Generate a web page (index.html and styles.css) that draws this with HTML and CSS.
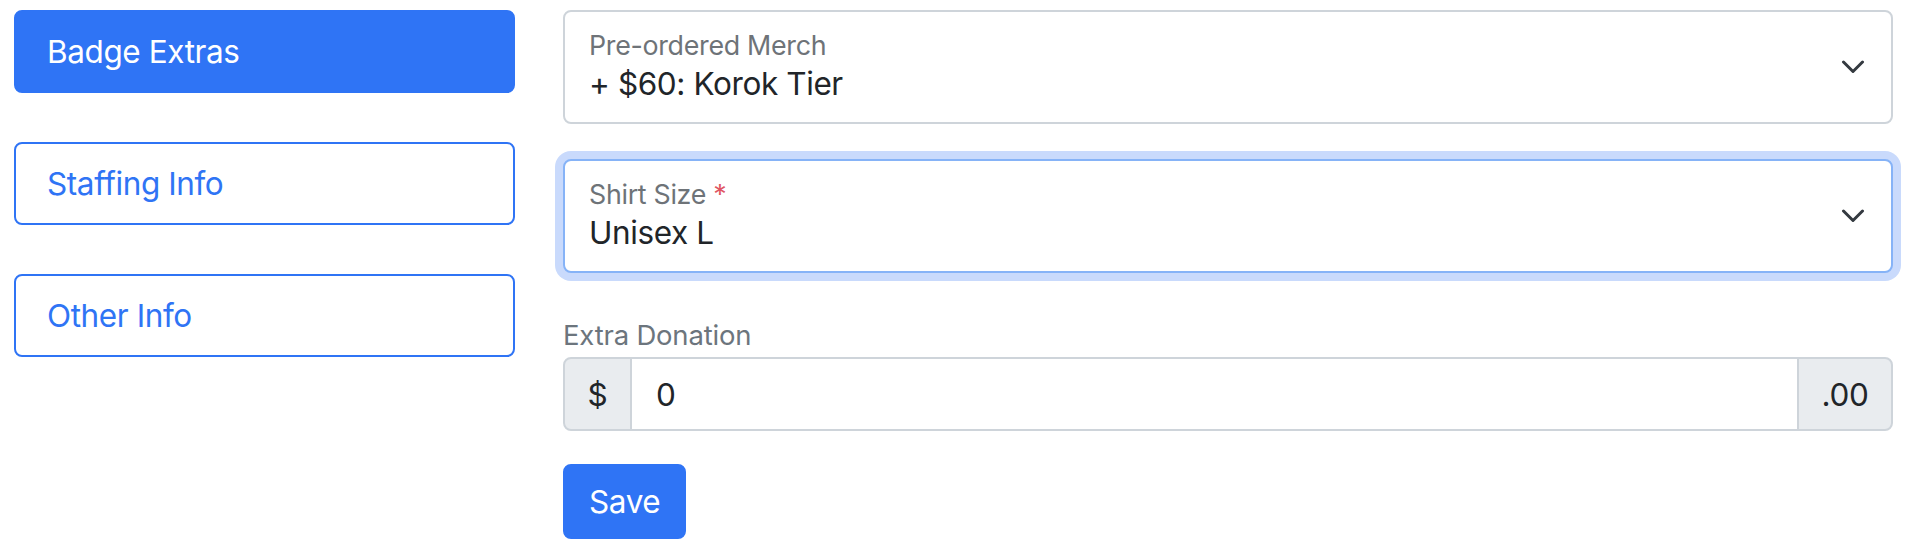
FILE: index.html
```html
<!DOCTYPE html>
<html lang="en">
<head>
<meta charset="utf-8">
<title>Badge Extras</title>
<link rel="stylesheet" href="styles.css">
</head>
<body>
<div class="page">
  <nav class="side-nav">
    <a class="nav-item active" href="#">Badge Extras</a>
    <a class="nav-item" href="#">Staffing Info</a>
    <a class="nav-item" href="#">Other Info</a>
  </nav>
  <form class="form">
    <div class="select-box">
      <div class="select-text">
        <span class="float-label">Pre-ordered Merch</span>
        <span class="select-value">+ $60: Korok Tier</span>
      </div>
      <svg class="chevron" width="24" height="14" viewBox="0 0 24 14"><polyline points="2.5,2 12,11.5 21.5,2" fill="none" stroke="#343a40" stroke-width="3" stroke-linecap="round" stroke-linejoin="round"/></svg>
    </div>
    <div class="select-box focused">
      <div class="select-text">
        <span class="float-label">Shirt Size <span class="req">*</span></span>
        <span class="select-value">Unisex L</span>
      </div>
      <svg class="chevron" width="24" height="14" viewBox="0 0 24 14"><polyline points="2.5,2 12,11.5 21.5,2" fill="none" stroke="#343a40" stroke-width="3" stroke-linecap="round" stroke-linejoin="round"/></svg>
    </div>
    <label class="field-label">Extra Donation</label>
    <div class="input-group">
      <span class="addon addon-left">$</span>
      <span class="input">0</span>
      <span class="addon addon-right">.00</span>
    </div>
    <div class="actions">
      <button type="button" class="btn-save">Save</button>
    </div>
  </form>
</div>
</body>
</html>
```
FILE: styles.css
```css
* { box-sizing: border-box; }
html, body { margin: 0; padding: 0; background: #fff; }
body {
  font-family: Inter, "Noto Sans", "Liberation Sans", sans-serif;
  color: #212529;
}
.page {
  display: grid;
  grid-template-columns: 501px 1fr;
  column-gap: 48px;
  padding: 10px 17px 0 14px;
}
.side-nav {
  display: flex;
  flex-direction: column;
  gap: 49px;
}
.nav-item {
  display: block;
  height: 83px;
  padding: 16px 31px;
  border: 2px solid #2f74f5;
  border-radius: 8px;
  font-size: 31.5px;
  line-height: 47px;
  letter-spacing: -0.4px;
  color: #2f74f5;
  text-decoration: none;
  background: #fff;
}
.nav-item.active {
  background: #2f74f5;
  color: #fff;
}
.form {
  display: flex;
  flex-direction: column;
}
.select-box {
  height: 114px;
  border: 2px solid #ced4da;
  border-radius: 8px;
  display: flex;
  align-items: center;
  padding: 0 26px 0 24px;
  margin-bottom: 35px;
  background: #fff;
}
.select-box.focused {
  border-color: #86b3f7;
  box-shadow: 0 0 0 8px #c9dafc;
  margin-bottom: 0;
}
.select-text {
  flex: 1;
  display: flex;
  flex-direction: column;
  align-self: stretch;
  padding-top: 17px;
}
.float-label {
  font-size: 26.8px;
  line-height: 32px;
  letter-spacing: -0.3px;
  color: #6e7378;
}
.req { color: #e05563; }
.select-value {
  margin-top: 3px;
  font-size: 31.5px;
  line-height: 40px;
  letter-spacing: -0.4px;
  color: #212529;
}
.chevron { display: block; flex: none; }
.field-label {
  display: block;
  margin-top: 42px;
  font-size: 27.5px;
  line-height: 41px;
  letter-spacing: -0.2px;
  color: #6c757d;
}
.input-group {
  display: flex;
  height: 74px;
  margin-top: 1px;
}
.addon {
  display: flex;
  align-items: center;
  padding: 0 22px;
  background: #e9ecef;
  border: 2px solid #ced4da;
  font-size: 31.5px;
  letter-spacing: -0.4px;
  color: #212529;
}
.addon-left { border-radius: 8px 0 0 8px; width: 69px; justify-content: center; }
.addon-right { border-radius: 0 8px 8px 0; width: 96px; justify-content: center; }
.input {
  flex: 1;
  display: flex;
  align-items: center;
  padding: 0 24px;
  border-top: 2px solid #ced4da;
  border-bottom: 2px solid #ced4da;
  font-size: 31.5px;
  color: #212529;
}
.actions { margin-top: 33px; }
.btn-save {
  height: 75px;
  padding: 0 24px;
  border: 2px solid #2f74f5;
  border-radius: 8px;
  background: #2f74f5;
  color: #fff;
  font-family: Inter, "Noto Sans", "Liberation Sans", sans-serif;
  font-size: 31.5px;
  line-height: 47px;
  letter-spacing: -0.4px;
  cursor: pointer;
}
```
